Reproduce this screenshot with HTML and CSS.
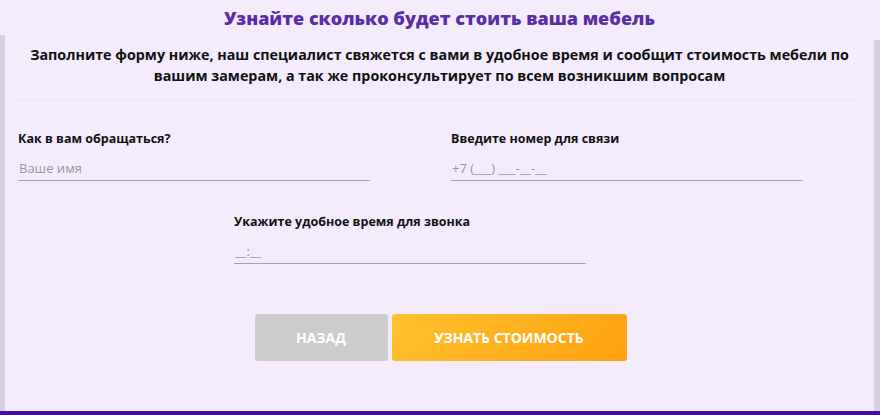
FILE: index.html
```html
<!DOCTYPE html>
<html lang="ru">
<head>
<meta charset="utf-8">
<link rel="stylesheet" href="styles.css">
</head>
<body>
<div class="page">
  <div class="strip strip-left"></div>
  <main class="panel">
    <header class="head">
      <h1 class="title">Узнайте сколько будет стоить ваша мебель</h1>
      <p class="lead">Заполните форму ниже, наш специалист свяжется с вами в удобное время и сообщит стоимость мебели по вашим замерам, а так же проконсультирует по всем возникшим вопросам</p>
    </header>
    <form class="form">
      <div class="row">
        <label class="field">
          <span class="label">Как в вам обращаться?</span>
          <input class="input" type="text" placeholder="Ваше имя">
        </label>
        <label class="field">
          <span class="label">Введите номер для связи</span>
          <input class="input" type="text" placeholder="+7 (___) ___-__-__">
        </label>
      </div>
      <label class="field field-time">
        <span class="label">Укажите удобное время для звонка</span>
        <input class="input" type="text" placeholder="__:__">
      </label>
      <div class="actions">
        <button type="button" class="btn btn-back">Назад</button>
        <button type="button" class="btn btn-go">Узнать стоимость</button>
      </div>
    </form>
  </main>
  <div class="strip strip-right"></div>
</div>
<div class="bottom-bar"></div>
</body>
</html>
```
FILE: styles.css
```css
* { box-sizing: border-box; }
html, body { margin: 0; padding: 0; }
body {
  width: 880px;
  height: 415px;
  overflow: hidden;
  background: #f4ecfc;
  font-family: "Open Sans", "Noto Sans", sans-serif;
  color: #111;
}
.page {
  display: flex;
  height: 411px;
}
.strip {
  background: #d8d0e0;
}
.strip-left { width: 5px; margin-top: 35px; }
.strip-right { width: 6px; margin-top: 40px; }
.panel {
  flex: 1;
  background: #f4ecfc;
}
.head {
  margin: 0 13px;
  padding: 6px 0 14px;
  border-bottom: 1px solid #ebe2f3;
  text-align: center;
}
.title {
  margin: 0;
  font-size: 18px;
  line-height: 24px;
  font-weight: 800;
  color: #5a2ca8;
}
.lead {
  margin: 14px 0 0;
  font-size: 14.3px;
  line-height: 21px;
  font-weight: 700;
  color: #111;
}
.form {
  padding-top: 29px;
}
.row {
  display: grid;
  grid-template-columns: 352px 352px;
  column-gap: 81px;
  padding-left: 13px;
}
.field {
  display: flex;
  flex-direction: column;
  gap: 10px;
}
.field-time {
  width: 352px;
  margin: 32px 0 0 229px;
}
.label {
  font-size: 12.5px;
  line-height: 18px;
  font-weight: 700;
  color: #111;
}
.input {
  height: 23px;
  padding: 0 0 2px 1px;
  border: 0;
  border-bottom: 1px solid #a59fae;
  background: transparent;
  font-family: inherit;
  font-size: 13px;
  color: #333;
  outline: none;
}
.input::placeholder {
  color: #9a96a0;
}
.actions {
  display: flex;
  justify-content: center;
  gap: 4px;
  margin-top: 50px;
  padding-left: 2px;
}
.btn {
  height: 47px;
  border: 0;
  border-radius: 3px;
  font-family: inherit;
  font-size: 14px;
  font-weight: 700;
  text-transform: uppercase;
  color: #fff;
}
.btn-back {
  width: 133px;
  background: #cccccc;
}
.btn-go {
  width: 235px;
  background: linear-gradient(135deg, #ffc32d 0%, #ffa010 100%);
}
.bottom-bar {
  height: 4px;
  background: #4a0aa3;
}
```
